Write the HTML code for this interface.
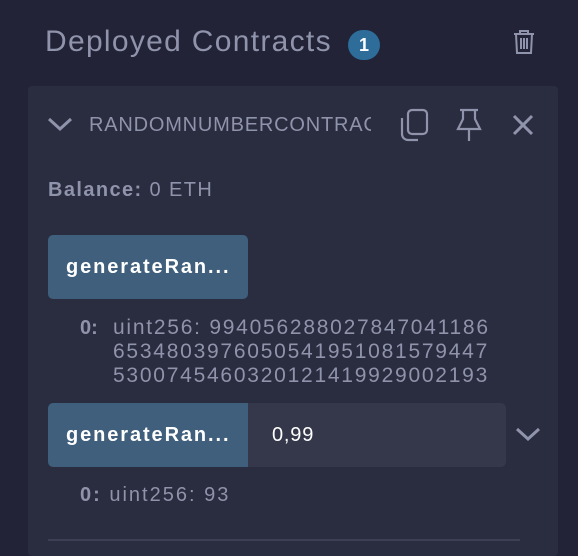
<!DOCTYPE html>
<html><head><meta charset="utf-8"><style>
*{margin:0;padding:0;box-sizing:border-box}
body{width:578px;height:542px;background:#222336;font-family:"Liberation Sans",sans-serif;color:#8f93ab;position:relative;overflow:hidden}
.a{position:absolute;white-space:nowrap}
.panel{position:absolute;left:28px;top:86px;width:530px;height:470px;background:#2a2c3f;border-radius:4px}
.btn{position:absolute;left:48px;width:200px;height:64px;background:#3f5f7c;border-radius:5px;color:#fff;font-weight:bold;font-size:20px;letter-spacing:1.9px;line-height:64px;padding-left:18px}
</style></head><body>
<div class="a" style="left:45px;top:25px;font-size:30px;letter-spacing:1.3px;color:#8f93ab">Deployed Contracts</div>
<div class="a" style="left:348px;top:30px;width:32px;height:30px;border-radius:15px;background:#2e6c9a;color:#fff;font-weight:bold;font-size:18px;text-align:center;line-height:30px">1</div>
<svg class="a" style="left:512px;top:29px" width="24" height="26" viewBox="0 0 24 26" fill="none" stroke="#8f93ab" stroke-width="2"><path d="M2 5h20M8 5V2h8v3M4 5l1 19h14l1-19M9 9v11M12 9v11M15 9v11"/></svg>
<div class="panel"></div>
<svg class="a" style="left:47px;top:116px" width="26" height="16" viewBox="0 0 26 16" fill="none" stroke="#8f93ab" stroke-width="3"><path d="M2 3l11 10 11-10"/></svg>
<div class="a" style="left:89px;top:114px;font-size:20px;width:282px;overflow:hidden;letter-spacing:0.8px">RANDOMNUMBERCONTRACT</div>
<svg class="a" style="left:399px;top:108px" width="32" height="34" viewBox="0 0 32 34" fill="none" stroke="#8f93ab" stroke-width="2.2"><rect x="9" y="2" width="19" height="24" rx="4"/><path d="M3 10v16a6 6 0 0 0 6 6h10"/></svg>
<svg class="a" style="left:456px;top:108px" width="26" height="34" viewBox="0 0 26 34" fill="none" stroke="#8f93ab" stroke-width="2.2"><path d="M4 2h18M7 2v9l-5 10h22l-5-10V2M13 21v12"/></svg>
<svg class="a" style="left:512px;top:114px" width="22" height="22" viewBox="0 0 22 22" fill="none" stroke="#8f93ab" stroke-width="3"><path d="M2 2l18 18M20 2L2 20"/></svg>
<div class="a" style="left:48px;top:179px;font-size:20px;letter-spacing:1.4px"><b>Balance:</b> 0 ETH</div>
<div class="btn" style="top:235px">generateRan...</div>
<div class="a" style="left:80px;top:317px;font-size:20px;font-weight:bold">0:</div>
<div class="a" style="left:113px;top:316px;font-size:21px;letter-spacing:1.75px;line-height:24px">uint256: 994056288027847041186<br>6534803976050541951081579447<br>5300745460320121419929002193</div>
<div class="btn" style="top:403px;border-radius:5px 0 0 5px">generateRan...</div>
<div class="a" style="left:248px;top:403px;width:258px;height:64px;background:#35384a;border-radius:0 5px 5px 0;color:#fff;font-size:20px;letter-spacing:0.8px;line-height:64px;padding-left:24px">0,99</div>
<svg class="a" style="left:515px;top:426px" width="26" height="16" viewBox="0 0 26 16" fill="none" stroke="#8f93ab" stroke-width="3"><path d="M2 3l11 10 11-10"/></svg>
<div class="a" style="left:80px;top:484px;font-size:20px;letter-spacing:2px"><b>0:</b> uint256: 93</div>
<div class="a" style="left:48px;top:539px;width:472px;height:2px;background:#3d4055"></div>
</body></html>
